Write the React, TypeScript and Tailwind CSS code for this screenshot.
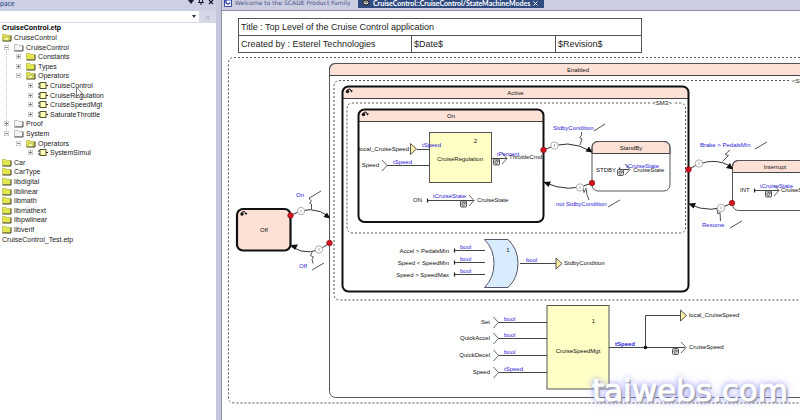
import React from "react";

type IconKind = "yellow" | "open" | "white" | "op";
type Node = {
  label: string;
  depth: number;
  icon?: IconKind;
  toggle?: "plus" | "minus";
  bold?: boolean;
};

const NODES: Node[] = [
  { label: "CruiseControl.etp", depth: 0, bold: true },
  { label: "CruiseControl", depth: 0, icon: "open" },
  { label: "CruiseControl", depth: 1, icon: "white", toggle: "minus" },
  { label: "Constants", depth: 2, icon: "yellow", toggle: "plus" },
  { label: "Types", depth: 2, icon: "yellow", toggle: "plus" },
  { label: "Operators", depth: 2, icon: "open", toggle: "minus" },
  { label: "CruiseControl", depth: 3, icon: "op", toggle: "plus" },
  { label: "CruiseRegulation", depth: 3, icon: "op", toggle: "plus" },
  { label: "CruiseSpeedMgt", depth: 3, icon: "op", toggle: "plus" },
  { label: "SaturateThrottle", depth: 3, icon: "op", toggle: "plus" },
  { label: "Proof", depth: 1, icon: "white", toggle: "plus" },
  { label: "System", depth: 1, icon: "white", toggle: "minus" },
  { label: "Operators", depth: 2, icon: "open", toggle: "minus" },
  { label: "SystemSimul", depth: 3, icon: "op", toggle: "plus" },
  { label: "Car", depth: 0, icon: "yellow" },
  { label: "CarType", depth: 0, icon: "yellow" },
  { label: "libdigital", depth: 0, icon: "yellow" },
  { label: "liblinear", depth: 0, icon: "yellow" },
  { label: "libmath", depth: 0, icon: "yellow" },
  { label: "libmathext", depth: 0, icon: "yellow" },
  { label: "libpwlinear", depth: 0, icon: "yellow" },
  { label: "libverif", depth: 0, icon: "yellow" },
  { label: "CruiseControl_Test.etp", depth: 0 },
];

const INDENT = ["pl-0", "pl-0", "pl-[12px]", "pl-[24px]"];

function NodeIcon({ kind }: { kind: IconKind }) {
  if (kind === "op") {
    return (
      <svg className="h-[9px] w-[10px] shrink-0" viewBox="0 0 10 9" aria-hidden="true">
        <path d="M0 3h2M0 6h2M8 4.500h2" stroke="#222" />
        <rect x="2" y="1.500" width="6" height="6" fill="#ffffb8" stroke="#55552a" />
      </svg>
    );
  }
  const white = kind === "white";
  return (
    <svg className="h-[9px] w-[10px] shrink-0" viewBox="0 0 10 9" aria-hidden="true">
      <path d="M.5 7.500V1.500H4l1 1h3.500v5z" fill={white ? "#f4f4f2" : "#e2e650"} stroke={white ? "#aaa" : "#b4b440"} strokeWidth=".7" />
      <path d="M.5 8H9V2.500" fill="none" stroke={white ? "#555" : "#444420"} strokeWidth="1" />
      {kind === "open" && <path d="M1 7.500L3 4H7.500L6.500 7.500z" fill="#f3f59a" stroke="#7c7c28" strokeWidth=".5" />}
    </svg>
  );
}

function TreeRow({ node }: { node: Node }) {
  return (
    <li className={`flex min-h-0 items-center ${INDENT[node.depth]}`}>
      {node.toggle && (
        <button
          aria-label={`Toggle ${node.label}`}
          aria-expanded={node.toggle === "minus"}
          className="mr-[5px] ml-[2px] flex size-[5px] shrink-0"
        >
          <svg className="size-[5px]" viewBox="0 0 5 5" aria-hidden="true">
            <rect x=".25" y=".25" width="4.500" height="4.500" fill="#fff" stroke="#aaa" strokeWidth=".5" />
            <path d={node.toggle === "plus" ? "M1 2.500h3M2.500 1v3" : "M1 2.500h3"} stroke="#555" strokeWidth=".7" />
          </svg>
        </button>
      )}
      {node.icon && <NodeIcon kind={node.icon} />}
      <span className={node.bold ? "font-bold text-black" : node.icon ? "ml-[2px]" : ""}>{node.label}</span>
    </li>
  );
}

function Sidebar() {
  return (
    <aside className="flex w-[216px] shrink-0 flex-col bg-white">
      <header className="flex h-[11px] items-start justify-between bg-[#cdd0e4] pr-[2px] text-[7px] leading-[6px] text-[#46659c]">
        <h2 className="font-[Lato,sans-serif] font-bold">pace</h2>
        <div className="flex gap-[4px] text-[#1b1b3a]">
          <button aria-label="Menu">
            <svg className="h-[5px] w-[6px]" viewBox="0 0 6 5"><path d="M0 0h6L3 4z" fill="currentColor" /></svg>
          </button>
          <button aria-label="Pin">
            <svg className="h-[5px] w-[6px]" viewBox="0 0 6 5"><path d="M1.500 0v2.500h3V0M0 2.500h6M3 2.500V5" fill="none" stroke="currentColor" /></svg>
          </button>
          <button aria-label="Close">
            <svg className="h-[5px] w-[6px]" viewBox="0 0 6 5"><path d="M1 0l4 4M5 0L1 4" stroke="currentColor" strokeWidth="1.200" /></svg>
          </button>
        </div>
      </header>
      <div className="flex h-[12px] bg-[#d6d8e8]">
        <div className="relative flex-1">
          <select aria-label="Filter" className="block h-[11px] w-full appearance-none bg-white text-[7px]">
            <option></option>
          </select>
          <svg className="pointer-events-none absolute top-[4px] right-[3px] h-[3px] w-[4px]" viewBox="0 0 4 3"><path d="M0 0h4L2 3z" fill="#333" /></svg>
        </div>
        <button aria-label="Clear" className="flex w-[17px] items-center justify-center">
          <svg className="size-[5px]" viewBox="0 0 5 5"><path d="M.5.5l4 4M4.500.5l-4 4" stroke="#a9abc0" /></svg>
        </button>
      </div>
      <div className="relative">
        <div className="absolute top-[28px] left-[6px] h-[80px] border-l border-dotted border-[#c8c8c8]" />
        <ul className="relative grid h-[221px] auto-rows-fr pl-[2px] text-[7px] leading-[9px] whitespace-nowrap text-[#222]">
          {NODES.map((n, i) => (
            <TreeRow key={i} node={n} />
          ))}
        </ul>
        <svg className="absolute top-[64px] left-[76px] h-[12px] w-[8px]" viewBox="0 0 8 12" aria-hidden="true">
          <path d="M.5.5v9l2-2 1.500 3.500 1.500-.7L4 7h3z" fill="#fff" stroke="#555" strokeWidth=".7" />
        </svg>
      </div>
    </aside>
  );
}

function Tabs() {
  return (
    <div role="tablist" className="flex h-[11px] items-start border-b border-[#8d90a6] bg-[#cccde0] whitespace-nowrap">
      <button role="tab" aria-selected="false" className="flex h-[8px] w-[136px] items-start gap-[2px] pl-[2px] text-[#47568a]">
        <svg className="h-[7px] w-[9px] shrink-0" viewBox="0 0 9 7" aria-hidden="true">
          <path d="M.5 0v6.500h7V0z" fill="#fff" stroke="#33449a" />
          <path d="M2 0v2.500c1 2 3 2 4 0" fill="none" stroke="#2b3fae" strokeWidth="1.400" />
        </svg>
        <span className="font-['DejaVu_Sans',sans-serif] text-[6px] leading-[6px]">Welcome to the SCADE Product Family</span>
      </button>
      <button role="tab" aria-selected="true" className="flex h-[8px] w-[186px] items-start gap-[3px] bg-[#304b80] pl-[4px] text-white">
        <svg className="h-[6px] w-[8px] shrink-0" viewBox="0 0 8 6" aria-hidden="true">
          <ellipse cx="4" cy="2.500" rx="3" ry="2.500" fill="#d9d9c0" stroke="#1c1c1c" />
          <path d="M2.500 2h3" stroke="#222" />
        </svg>
        <span className="flex-1 text-left font-[Lato,sans-serif] text-[7px] leading-[6px] font-bold">CruiseControl::CruiseControl/StateMachineModes</span>
        <svg className="mt-px mr-[6px] size-[5px] shrink-0" viewBox="0 0 5 5" aria-label="Close tab"><path d="M.5.5l4 4M4.500.5l-4 4" stroke="#fff" /></svg>
      </button>
    </div>
  );
}

type LabelProps = { x: number; y: number; children: React.ReactNode; anchor?: "start" | "middle" | "end"; blue?: boolean; bold?: boolean };

function Label({ x, y, children, anchor = "start", blue, bold }: LabelProps) {
  return (
    <text x={x} y={y + 2} textAnchor={anchor} fill={blue ? "#2a22d8" : "#111"} fontWeight={bold ? 700 : 400} stroke="none">
      {children}
    </text>
  );
}

function Dashed({ d }: { d: string }) {
  return <path d={d} fill="none" stroke="#555" strokeWidth="1" strokeDasharray="2 2" />;
}

function State({ x, y, w, h, name, labelX, heavy, initial }: { x: number; y: number; w: number; h: number; name: string; labelX?: number; heavy?: boolean; initial?: boolean }) {
  const r = 6;
  const header = 12;
  return (
    <g>
      <rect x={x} y={y} width={w} height={h} rx={r} fill="#fff" />
      <path d={`M${x} ${y + header}V${y + r}q0 ${-r} ${r} ${-r}H${x + w - r}q${r} 0 ${r} ${r}V${y + header}z`} fill="#fde1d6" stroke="#444" strokeWidth="1" />
      <rect x={x} y={y} width={w} height={h} rx={r} fill="none" stroke={heavy ? "#111" : "#555"} strokeWidth={heavy ? 2 : 1} />
      {initial && <InitialMark x={x + 4} y={y + 4} />}
      <Label x={labelX ?? x + w / 2} y={y + header / 2} anchor="middle">{name}</Label>
    </g>
  );
}

function InitialMark({ x, y }: { x: number; y: number }) {
  return (
    <g>
      <circle cx={x + 1} cy={y + 1} r="1.700" fill="#111" />
      <path d={`M${x + 1} ${y - 1}q3 -2 4 2`} fill="none" stroke="#111" />
      <path d={`M${x + 3.5} ${y}h3l-1.500 2z`} fill="#111" />
    </g>
  );
}

function Transition({ d, from, badge, head, zig, slash }: { d: string; from: [number, number]; badge: [number, number]; head: string; zig: string; slash: string }) {
  return (
    <g>
      <path d={d} fill="none" stroke="#333" />
      <path d={zig} fill="none" stroke="#555" />
      <path d={slash} stroke="#555" />
      <path d={head} fill="#111" />
      <circle cx={badge[0]} cy={badge[1]} r="3.700" fill="#fff" stroke="#999" strokeWidth=".8" />
      <path d={`M${badge[0]} ${badge[1] - 1.5}v3`} stroke="#999" strokeWidth=".8" />
      <circle cx={from[0]} cy={from[1]} r="2.800" fill="#d3131f" stroke="#7c0d14" strokeWidth=".6" />
    </g>
  );
}

function Chevron({ x, y }: { x: number; y: number }) {
  return <path d={`M${x} ${y - 5.5}L${x + 5} ${y}L${x} ${y + 5.5}`} fill="none" stroke="#555" strokeWidth=".9" />;
}

function Port({ x, y }: { x: number; y: number }) {
  return <path d={`M${x} ${y - 5.5}L${x + 6} ${y}L${x} ${y + 5.5}z`} fill="#ffeea6" stroke="#444" strokeWidth=".9" />;
}

function LastBox({ x, y }: { x: number; y: number }) {
  return (
    <g>
      <rect x={x} y={y} width="6" height="6" rx="1" fill="#e4e4e4" stroke="#444" strokeWidth=".9" />
      <path d={`M${x + 4} ${y + 4.3}a1.600 1.600 0 1 1 -.2 -2.600M${x + 4.6} ${y + 1}v1.800h-1.600`} fill="none" stroke="#222" strokeWidth=".7" />
    </g>
  );
}

function Wire({ d, tick }: { d: string; tick?: [number, number] }) {
  return (
    <g>
      <path d={d} fill="none" stroke="#444" />
      {tick && <path d={`M${tick[0]} ${tick[1] - 2}v4`} stroke="#222" strokeWidth="1.200" />}
    </g>
  );
}

const GATE_INPUTS = [
  { text: "Accel > PedalsMin", y: 250.5 },
  { text: "Speed < SpeedMin", y: 262.5 },
  { text: "Speed > SpeedMax", y: 274.5 },
];

const MGT_INPUTS = [
  { text: "Set", type: "bool", y: 322.5 },
  { text: "QuickAccel", type: "bool", y: 338.5 },
  { text: "QuickDecel", type: "bool", y: 355.5 },
  { text: "Speed", type: "tSpeed", y: 372.5 },
];

function Diagram() {
  return (
    <svg
      className="block h-[367px] w-[1000px] font-['Liberation_Sans',sans-serif] text-[6px]"
      viewBox="222 53 1000 367"
      role="img"
      aria-label="State machine diagram"
    >
      <Dashed d="M1300 57.500H234q-5.500 0 -5.500 6V397q0 6 6 6H1300" />
      <State x={329.5} y={63.5} w={900} h={334} name="Enabled" labelX={578} />
      <Dashed d="M789 80.500H340q-6 0 -6 6V294q0 6 6 6H1200" />
      <Label x={792} y={80.5}>&lt;SM2&gt;</Label>

      <State x={342.5} y={86.5} w={346} h={205} name="Active" heavy initial />
      <Dashed d="M650 103H353q-6 0 -6 6V227q0 6 6 6H680q5.500 0 5.500 -6V109q0 -6 -5.500 -6H673" />
      <Label x={662} y={102.5} anchor="middle">&lt;SM3&gt;</Label>

      <State x={358.5} y={109.5} w={185} h={112.5} name="On" heavy initial />
      <rect x="429.500" y="132.500" width="62" height="50" fill="#ffffc6" stroke="#555" />
      <Label x={475.5} y={141} anchor="middle">2</Label>
      <Label x={460} y={159} anchor="middle">CruiseRegulation</Label>
      <Label x={409} y={149} anchor="end">local_CruiseSpeed</Label>
      <Port x={410.5} y={149} />
      <Wire d="M417 149.500H429" />
      <Label x={422} y={145} blue>tSpeed</Label>
      <Label x={379} y={164.5} anchor="end">Speed</Label>
      <Chevron x={382} y={165.5} />
      <Wire d="M387 165.500H429" />
      <Label x={393} y={161.5} blue>tSpeed</Label>
      <Wire d="M491 158.500H507" />
      <Chevron x={502} y={158.5} />
      <LastBox x={493.5} y={159} />
      <Label x={509} y={157}>ThrottleCmd</Label>
      <Label x={497} y={154} blue>tPercent</Label>
      <Label x={422} y={200} anchor="end">ON</Label>
      <Wire d="M427 200.500H474" tick={[427.5, 200.5]} />
      <Chevron x={469} y={200.5} />
      <LastBox x={460.5} y={201} />
      <Label x={433} y={196} blue>tCruiseState</Label>
      <Label x={477} y={200}>CruiseState</Label>

      <State x={592} y={141.5} w={78} h={49.5} name="StandBy" />
      <Label x={596} y={169.5}>STDBY</Label>
      <Wire d="M619 169.500H629" tick={[619.5, 169.5]} />
      <Chevron x={625} y={169.5} />
      <LastBox x={617.5} y={169.5} />
      <Label x={633} y={169.5}>CruiseState</Label>
      <Label x={626} y={166} blue>tCruiseState</Label>

      <State x={732.5} y={160.5} w={85} h={50} name="Interrupt" />
      <Label x={740} y={189.5}>INT</Label>
      <Wire d="M754 190.500H779" tick={[754.5, 190.5]} />
      <Chevron x={774} y={190.5} />
      <LastBox x={765.5} y={191} />
      <Label x={781} y={190}>CruiseState</Label>
      <Label x={760} y={186} blue>tCruiseState</Label>

      <rect x="237" y="209" width="53.500" height="41.500" rx="6" fill="#fde1d6" stroke="#111" strokeWidth="2.200" />
      <InitialMark x={241} y={213} />
      <Label x={264} y={229.5} anchor="middle">Off</Label>

      <Transition d="M290.500 215.500Q311 203 330 217" from={[290.5, 215.5]} badge={[301, 211]} head="M330 218.500L323.500 217L327 212.500z" zig="M311.500 209.500V204l-2 -1l2 -2l-2 -2v-1.500" slash="M309.500 198L321 191" />
      <Label x={296} y={194.5} blue>On</Label>
      <Transition d="M329.500 243Q311 259 291 246.500" from={[329.5, 243]} badge={[319, 249.5]} head="M290.500 245L298 244.500L295 250z" zig="M312 252.500l-1.500 3l3 1.500l-1.500 2.500l1 4" slash="M312 270L324 263" />
      <Label x={299} y={266} blue>Off</Label>

      <Transition d="M543.500 150Q568 137 592 152" from={[543.5, 150]} badge={[554.5, 145.5]} head="M592.500 152.500L585.500 151.500L589 146.500z" zig="M581.500 132v3.500l-2 2l2.500 1.500l-2 6" slash="M594 131L605 124" />
      <Label x={553} y={128} blue>StdbyCondition</Label>
      <Transition d="M592 183Q569 194 543.500 182" from={[592, 183]} badge={[580, 187.5]} head="M543.500 182L551 181.500L548.500 187z" zig="M583 187.500l1 5l2 -4l1 6l2 5.500" slash="M608 207L620 200" />
      <Label x={556} y={204} blue>not StdbyCondition</Label>

      <Transition d="M688.500 169.500Q713 154 733 168" from={[688.5, 169.5]} badge={[699, 163.5]} head="M733 169.500L726 168L730 163z" zig="M730 150l-5 4.500l3.500 1l-6 6" slash="M755 149L767 142" />
      <Label x={700} y={145} blue>Brake &gt; PedalsMin</Label>
      <Transition d="M732 203Q712 215 688.500 204" from={[732, 203]} badge={[721, 208]} head="M688.500 203.500L696 203L693.500 208.500z" zig="M717 209l1 5l2 -1.500l.5 8.500" slash="M730 228L742 221" />
      <Label x={702} y={225} blue>Resume</Label>

      <path d="M484.500 239.500H508Q518 249 518 263.500T508 287.500H484.500Q494 278 494 263.500T484.500 239.500z" fill="#d9ecfd" stroke="#556" />
      <Label x={508} y={250} anchor="middle">1</Label>
      {GATE_INPUTS.map((g) => (
        <g key={g.text}>
          <Label x={449} y={g.y} anchor="end">{g.text}</Label>
          <Wire d={`M454 ${g.y}H485`} tick={[454.5, g.y]} />
          <Label x={460} y={g.y - 4} blue>bool</Label>
        </g>
      ))}
      <Wire d="M520 263.500H556" />
      <Label x={526} y={259.5} blue>bool</Label>
      <Port x={556} y={263.5} />
      <Label x={564} y={263}>StdbyCondition</Label>

      <rect x="547" y="305.500" width="62" height="83.500" fill="#ffffc6" stroke="#555" />
      <Label x={593.5} y={321} anchor="middle">1</Label>
      <Label x={578} y={351} anchor="middle">CruiseSpeedMgt</Label>
      {MGT_INPUTS.map((m) => (
        <g key={m.text}>
          <Label x={490} y={m.y - 1} anchor="end">{m.text}</Label>
          <Chevron x={493.5} y={m.y} />
          <Wire d={`M498.500 ${m.y}H547`} />
          <Label x={504} y={m.y - 4} blue>{m.type}</Label>
        </g>
      ))}
      <Wire d="M609 347.500H685M645.500 347.500V315.500H681" />
      <circle cx="645.500" cy="347.500" r="1.800" fill="#111" />
      <Label x={615} y={343.5} blue bold>tSpeed</Label>
      <Port x={680.5} y={315.5} />
      <Label x={689} y={315}>local_CruiseSpeed</Label>
      <Chevron x={681} y={347.5} />
      <LastBox x={672.5} y={348.5} />
      <Label x={689} y={347}>CruiseSpeed</Label>
    </svg>
  );
}

function TitleBlock() {
  return (
    <table className="mt-[7px] ml-[16px] w-[404px] table-fixed border-collapse text-[9px] leading-[16px] text-[#222]">
      <colgroup>
        <col className="w-[173px]" />
        <col className="w-[144px]" />
        <col />
      </colgroup>
      <tbody>
        <tr>
          <td colSpan={3} className="border border-[#555] px-[2px] py-0">Title : Top Level of the Cruise Control application</td>
        </tr>
        <tr>
          <td className="border border-[#555] px-[2px] py-0">Created by : Esterel Technologies</td>
          <td className="border border-[#555] px-[2px] py-0">$Date$</td>
          <td className="border border-[#555] px-[2px] py-0">$Revision$</td>
        </tr>
      </tbody>
    </table>
  );
}

export default function App() {
  return (
    <div className="relative flex h-screen overflow-hidden bg-[#c5c7dc] font-['Liberation_Sans',sans-serif]">
      <Sidebar />
      <main className="ml-[5px] flex min-w-0 flex-1 flex-col overflow-hidden border-l border-[#8d90a6] bg-white">
        <Tabs />
        <TitleBlock />
        <Diagram />
      </main>
      <div className="absolute right-[12px] bottom-[10px] font-['DejaVu_Sans',sans-serif] text-[31px] leading-[40px] text-white [-webkit-text-stroke:1px_white] [text-shadow:2px_2px_0_#a4a4ae,1px_1px_0_#a4a4ae,0_0_5px_#8c8cf0,0_0_10px_#a8a8f4]">
        taiwebs.com
      </div>
    </div>
  );
}
